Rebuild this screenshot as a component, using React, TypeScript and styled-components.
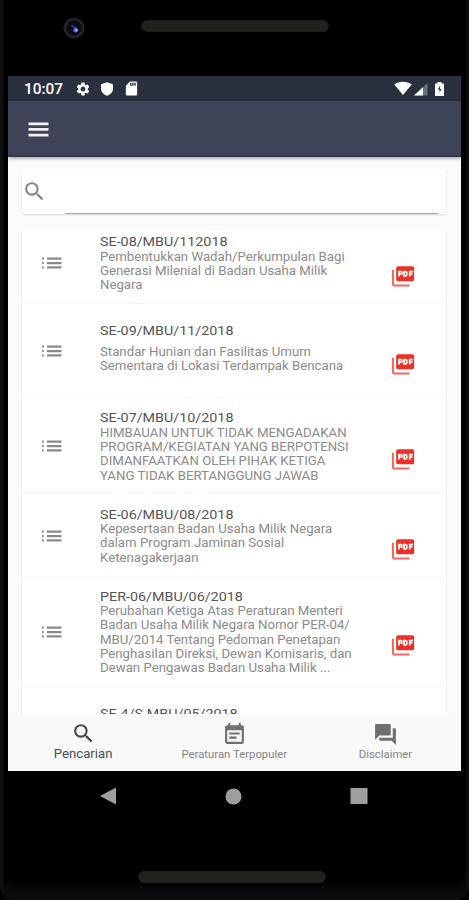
import React from "react";
import styled, { createGlobalStyle } from "styled-components";
import {
  MdEventNote,
  MdQuestionAnswer,
  MdSdCard,
  MdSearch,
  MdSettings,
} from "react-icons/md";

const GlobalStyle = createGlobalStyle`
  * { box-sizing: border-box; }
  body { margin: 0; background: #000; font-family: Roboto, "Liberation Sans", sans-serif; }
`;

const Phone = styled.div`
  width: 469px;
  height: 900px;
  overflow: hidden;
  display: flex;
  flex-direction: column;
  background: #000;
  border-left: 3px solid #101010;
  border-right: 3px solid #0c0c0c;
  border-radius: 0 0 14px 14px;
  box-shadow: inset 0 -22px 14px -10px #0d0d0d;
`;

const TopBezel = styled.div`
  height: 76px;
  flex: none;
  display: flex;
  align-items: flex-start;
  padding: 17px 0 0 60px;
`;

const Camera = styled.svg`
  width: 22px;
  height: 22px;
  margin-right: 56px;
`;

const Grille = styled.div`
  width: 188px;
  height: 12px;
  margin-top: 3px;
  border-radius: 6px;
  background: #22211e;
  border: 1px solid #1c1b18;
`;

const Screen = styled.div`
  width: 453px;
  height: 695px;
  margin-left: 5px;
  flex: none;
  display: flex;
  flex-direction: column;
  background: #fafafa;
  overflow: hidden;
`;

const StatusBar = styled.div`
  height: 25px;
  flex: none;
  display: flex;
  align-items: center;
  justify-content: space-between;
  padding: 0 13px 0 15.5px;
  background: #29313f;
  color: #fff;
`;

const StatusGroup = styled.div<{ $gap: number }>`
  display: flex;
  align-items: center;
  gap: ${(p) => p.$gap}px;
  svg { display: block; }
`;

const Clock = styled.span`
  width: 43px;
  font-size: 14px;
  font-weight: 500;
  line-height: 24px;
  span {
    display: inline-block;
    transform: scaleX(1.1);
    transform-origin: left;
  }
`;

const AppBar = styled.div`
  height: 56px;
  flex: none;
  display: flex;
  align-items: center;
  padding: 2px 0 0 20px;
  background: #3e4357;
  color: #f0f1f4;
  border-bottom: 2px solid #353a50;
  box-shadow: 0 1px 4px rgba(0, 0, 0, 0.45);
`;

const Content = styled.main`
  flex: 1;
  min-height: 0;
  display: flex;
  flex-direction: column;
  gap: 16px;
  padding: 13px 15px 0 14px;
  overflow: hidden;
`;

const Card = styled.section`
  flex: none;
  background: #fff;
  border-radius: 3px;
  box-shadow: 0 1px 2px rgba(0, 0, 0, 0.14);
`;

const SearchCard = styled(Card)`
  height: 43.5px;
  display: flex;
  align-items: stretch;
  padding-right: 8px;
  color: #858585;
`;

const SearchIcon = styled.div`
  width: 43px;
  padding-top: 9px;
  svg { display: block; }
`;

const SearchField = styled.div`
  flex: 1;
  border-bottom: 1.5px solid #a8a8a8;
`;

const Row = styled.article<{ $height: number }>`
  height: ${(p) => p.$height}px;
  display: grid;
  grid-template-columns: 78px 290px 1fr;
  border-bottom: 1px solid #f7f7f7;
`;

const IconSlot = styled.div<{ $center: number; $left: number; $red?: boolean }>`
  padding: ${(p) => p.$center - 13}px 0 0 ${(p) => p.$left}px;
  color: ${(p) => (p.$red ? "#ee3124" : "#8a8a8a")};
  svg { display: block; }
`;

const TextColumn = styled.div<{ $top: number }>`
  padding-top: ${(p) => p.$top}px;
  white-space: nowrap;
`;

const Title = styled.h2<{ $gap: number }>`
  margin: 0 0 ${(p) => p.$gap}px;
  font-size: 13.3px;
  font-weight: 400;
  line-height: 14.5px;
  color: #555;
  transform: scaleX(1.077);
  transform-origin: left;
`;

const Description = styled.p`
  margin: 0;
  font-size: 12px;
  line-height: 14.35px;
  color: #8b8b8b;
  white-space: pre-line;
  width: max-content;
  transform: scaleX(1.102);
  transform-origin: left;
`;

const Tabs = styled.nav`
  height: 57px;
  flex: none;
  display: grid;
  grid-template-columns: repeat(3, 1fr);
  background: #f9f9fa;
`;

const Tab = styled.div<{ $active?: boolean }>`
  display: flex;
  flex-direction: column;
  align-items: center;
  padding: ${(p) => (p.$active ? "7px 0 0" : "8px 1px 0 0")};
  color: ${(p) => (p.$active ? "#41454f" : "#6f6f6f")};
  svg { display: block; flex: none; }
`;

const TabLabel = styled.span<{ $active?: boolean }>`
  font-size: ${(p) => (p.$active ? 12.2 : 10.8)}px;
  line-height: 14px;
  margin-top: 1px;
  color: ${(p) => (p.$active ? "#4c4e55" : "#858585")};
  white-space: nowrap;
  transform: scaleX(${(p) => (p.$active ? 1.08 : 1.05)});
`;

const SystemNav = styled.div`
  height: 50px;
  flex: none;
  display: flex;
  justify-content: space-between;
  align-items: center;
  padding: 0 98px 0 96px;
  svg { display: block; }
`;

const BottomBezel = styled.div`
  display: flex;
  padding: 50px 0 0 135px;
  ${Grille} { margin: 0; }
`;

const HamburgerIcon = () => (
  <svg width="21" height="15" viewBox="0 0 21 15" fill="currentColor">
    <path d="M.5 .5h20v2.700H.5zM.5 6.100h20v2.700H.5zM.5 11.700h20v2.700H.5z" />
  </svg>
);

const ListIcon = () => (
  <svg width="26" height="26" viewBox="0 0 26 26" fill="currentColor">
    <path d="M8 7.500h14.500v2.300H8zM8 11.900h14.500v2.300H8zM8 16.300h14.500v2.300H8z" />
    <path d="M3 7.600h1.900v2H3zM3 12h1.900v2H3zM3 16.400h1.900v2H3z" />
  </svg>
);

const PdfIcon = () => (
  <svg width="26" height="25" viewBox="0 0 24 24" preserveAspectRatio="none" fill="currentColor">
    <path d="M20.500 3H7.500c-1 0-1.800.8-1.800 1.800v11c0 1 .8 1.800 1.800 1.800h13c1 0 1.800-.8 1.800-1.800v-11c0-1-.8-1.800-1.800-1.800z" />
    <path d="M3.600 6.500H1.800v14c0 1.100.9 2 2 2H18v-1.900H3.600z" opacity=".75" />
    <path
      d="M8.200 13V8.200h1.600a1.300 1.300 0 0 1 0 2.600H8.200M13 8.200h1.200c.8 0 1.300.5 1.300 1.300v1.500c0 .8-.5 1.300-1.300 1.300H13zM18.200 13V8.200h3M18.200 10.600h2.500"
      fill="none"
      stroke="#fff"
      strokeWidth="1.600"
    />
  </svg>
);

type Rule = {
  title: string;
  text: string;
  height: number;
  top: number;
  gap?: number;
  icon: number;
  pdf: number;
};

const rules: Rule[] = [
  {
    title: "SE-08/MBU/112018",
    text: "Pembentukkan Wadah/Perkumpulan Bagi\nGenerasi Milenial di Badan Usaha Milik\nNegara",
    height: 74, top: 5.5, icon: 33.5, pdf: 46.5,
  },
  {
    title: "SE-09/MBU/11/2018",
    text: "Standar Hunian dan Fasilitas Umum\nSementara di Lokasi Terdampak Bencana",
    height: 94.5, top: 20, gap: 6.5, icon: 47, pdf: 60.5,
  },
  {
    title: "SE-07/MBU/10/2018",
    text: "HIMBAUAN UNTUK TIDAK MENGADAKAN\nPROGRAM/KEGIATAN YANG BERPOTENSI\nDIMANFAATKAN OLEH PIHAK KETIGA\nYANG TIDAK BERTANGGUNG JAWAB",
    height: 95, top: 13, icon: 48, pdf: 61,
  },
  {
    title: "SE-06/MBU/08/2018",
    text: "Kepesertaan Badan Usaha Milik Negara\ndalam Program Jaminan Sosial\nKetenagakerjaan",
    height: 84.5, top: 14.5, icon: 42.5, pdf: 55.5,
  },
  {
    title: "PER-06/MBU/06/2018",
    text: "Perubahan Ketiga Atas Peraturan Menteri\nBadan Usaha Milik Negara Nomor PER-04/\nMBU/2014 Tentang Pedoman Penetapan\nPenghasilan Direksi, Dewan Komisaris, dan\nDewan Pengawas Badan Usaha Milik ...",
    height: 109, top: 12, icon: 54, pdf: 67,
  },
  { title: "SE-4/S.MBU/05/2018", text: "", height: 90, top: 20, icon: 54, pdf: 67 },
];

export default function App() {
  return (
    <>
      <GlobalStyle />
      <Phone>
        <TopBezel>
          <Camera viewBox="0 0 22 22">
            <circle cx="11" cy="11" r="10.500" fill="#222123" />
            <circle cx="11" cy="11" r="7.500" fill="#0b0a14" />
            <path d="M8.500 8l5 4" stroke="#26348b" strokeWidth="2" />
            <circle cx="12.800" cy="13" r="2.500" fill="#4c59c8" />
            <circle cx="13" cy="13.200" r="1.200" fill="#a3aaff" />
          </Camera>
          <Grille />
        </TopBezel>
        <Screen>
          <StatusBar>
            <StatusGroup $gap={8}>
              <Clock><span>10:07</span></Clock>
              <MdSettings size={16} />
              <svg width="16" height="16" viewBox="0 0 16 16">
                <path d="M8 1.300l6 2v4.200c0 3.400-2.400 5.900-6 7.200-3.600-1.300-6-3.800-6-7.200V3.300z" fill="currentColor" />
              </svg>
              <MdSdCard size={17} />
            </StatusGroup>
            <StatusGroup $gap={2}>
              <svg width="18" height="15" viewBox="0 0 18 15">
                <path d="M.3 3.500C5-.2 13-.2 17.700 3.500L9 14z" fill="currentColor" />
              </svg>
              <svg width="14" height="14" viewBox="0 0 14 14">
                <path d="M13.500 1v12.500H0z" fill="currentColor" opacity=".3" />
                <path d="M9 5.200v8.300H0z" fill="currentColor" />
              </svg>
              <svg width="18" height="16" viewBox="0 0 18 16">
                <path d="M7.500 2.500V1h4v1.500H14V15H5V2.500z" fill="currentColor" />
                <path d="M10 4.800L7.800 8.600h1.700v3L11.600 8H10z" fill="#29313f" />
              </svg>
            </StatusGroup>
          </StatusBar>
          <AppBar>
            <HamburgerIcon />
          </AppBar>
          <Content>
            <SearchCard>
              <SearchIcon><MdSearch size={25} /></SearchIcon>
              <SearchField />
            </SearchCard>
            <Card>
              {rules.map((r) => (
                <Row key={r.title} $height={r.height}>
                  <IconSlot $center={r.icon} $left={17}><ListIcon /></IconSlot>
                  <TextColumn $top={r.top}>
                    <Title $gap={r.gap ?? 0}>{r.title}</Title>
                    <Description>{r.text}</Description>
                  </TextColumn>
                  <IconSlot $center={r.pdf} $left={0} $red><PdfIcon /></IconSlot>
                </Row>
              ))}
            </Card>
          </Content>
          <Tabs>
            <Tab $active>
              <MdSearch size={25} />
              <TabLabel $active>Pencarian</TabLabel>
            </Tab>
            <Tab>
              <MdEventNote size={25} />
              <TabLabel>Peraturan Terpopuler</TabLabel>
            </Tab>
            <Tab>
              <MdQuestionAnswer size={25} />
              <TabLabel>Disclaimer</TabLabel>
            </Tab>
          </Tabs>
        </Screen>
        <SystemNav>
          <svg width="18" height="18" viewBox="0 0 18 18">
            <path d="M1 9L17 .5v17z" fill="#9e9e9e" />
          </svg>
          <svg width="17" height="17" viewBox="0 0 17 17">
            <circle cx="8.500" cy="8.500" r="8" fill="#9e9e9e" />
          </svg>
          <svg width="18" height="16" viewBox="0 0 18 16">
            <path d="M.5 0h17v16H.5z" fill="#9e9e9e" />
          </svg>
        </SystemNav>
        <BottomBezel>
          <Grille />
        </BottomBezel>
      </Phone>
    </>
  );
}
